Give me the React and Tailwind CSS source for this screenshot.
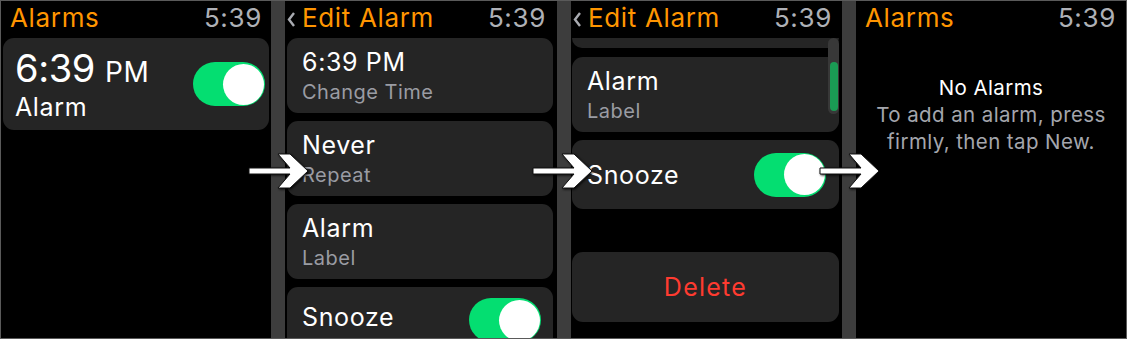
import React from "react";

const font = { fontFamily: "Inter, 'Noto Sans', sans-serif" };

// Green switch in the "on" state
const Toggle = () => (
  <div className="w-[72px] h-[44px] rounded-full bg-[#04de71] flex items-center justify-end pr-[1px]">
    <div className="w-[41px] h-[41px] rounded-full bg-white" />
  </div>
);

const Chevron = () => (
  <svg width="9" height="17" viewBox="0 0 9 17" className="mr-[6px] mt-[3px]">
    <polyline points="7,2 2,8.5 7,15" fill="none" stroke="#a9abb1" strokeWidth="2.4" />
  </svg>
);

const Header = ({ title, back }) => (
  <div className="h-[37px] flex items-start justify-between pt-[1px] shrink-0">
    <div className="flex items-center">
      {back && <Chevron />}
      <span className="text-[26px] leading-[32px] text-[#ff9500] tracking-wide">{title}</span>
    </div>
    <span className="text-[26px] leading-[32px] text-[#aeb0b6] tracking-wide">5:39</span>
  </div>
);

const InfoCard = ({ title, sub }) => (
  <div className="h-[75px] shrink-0 rounded-[11px] bg-[#252525] px-[15px] pt-[9px]">
    <div className="text-[25px] leading-[30px] text-white tracking-wide">{title}</div>
    <div className="text-[20px] leading-[30px] text-[#9a9ca3] tracking-wide">{sub}</div>
  </div>
);

const Arrow = ({ left }) => (
  <svg
    width="62"
    height="38"
    viewBox="0 0 62 38"
    className="absolute top-[151px] drop-shadow-[1px_1px_1px_rgba(0,0,0,0.8)]"
    style={{ left }}
  >
    <polygon
      points="1,16 42,16 30,2 42,2 60,19 42,36 30,36 42,22 1,22"
      fill="white"
      stroke="#111"
      strokeWidth="1"
    />
  </svg>
);

const Separator = () => <div className="w-[14px] shrink-0 bg-[#3d3d3d]" />;

export default function App() {
  return (
    <div
      className="relative w-[1127px] h-[339px] bg-black border border-[#5a5a5a] flex overflow-hidden"
      style={font}
    >
      {/* Screen 1: alarm list */}
      <div className="w-[270px] shrink-0 flex flex-col px-[2px]">
        <div className="px-[7px]">
          <Header title="Alarms" />
        </div>
        <div className="h-[92px] rounded-[11px] bg-[#252525] flex items-center justify-between pl-[12px] pr-[4px]">
          <div className="-mt-[3px]">
            <div className="flex items-baseline text-white">
              <span className="text-[38px] leading-[44px] tracking-[-0.01em]">6:39</span>
              <span className="text-[28px] leading-[44px] ml-[10px] tracking-wide">PM</span>
            </div>
            <div className="text-[25px] leading-[26px] text-white tracking-wide">Alarm</div>
          </div>
          <Toggle />
        </div>
      </div>
      <Separator />

      {/* Screen 2: edit alarm */}
      <div className="w-[272px] shrink-0 flex flex-col pl-[2px] pr-[4px]">
        <div className="pr-[7px]">
          <Header title="Edit Alarm" back />
        </div>
        <div className="flex flex-col gap-[8px]">
          <InfoCard title="6:39 PM" sub="Change Time" />
          <InfoCard title="Never" sub="Repeat" />
          <InfoCard title="Alarm" sub="Label" />
          <div className="h-[75px] shrink-0 rounded-[11px] bg-[#252525] flex items-start justify-between pl-[15px] pr-[12px] pt-[15px]">
            <span className="text-[25px] leading-[30px] text-white tracking-wide">Snooze</span>
            <div className="-mt-[4px]">
              <Toggle />
            </div>
          </div>
        </div>
      </div>
      <Separator />

      {/* Screen 3: edit alarm scrolled */}
      <div className="relative w-[271px] shrink-0 flex flex-col pl-[1px] pr-[3px]">
        <div className="pl-[1px] pr-[7px]">
          <Header title="Edit Alarm" back />
        </div>
        <div className="h-[10px] shrink-0 rounded-b-[11px] bg-[#252525]" />
        <div className="mt-[9px]">
          <InfoCard title="Alarm" sub="Label" />
        </div>
        <div className="mt-[8px] h-[69px] shrink-0 rounded-[11px] bg-[#252525] flex items-center justify-between pl-[15px] pr-[13px]">
          <span className="text-[25px] leading-[30px] text-white tracking-wide">Snooze</span>
          <Toggle />
        </div>
        <div className="mt-[43px] h-[70px] shrink-0 rounded-[11px] bg-[#252525] flex items-center justify-center">
          <span className="text-[25px] leading-[30px] text-[#ff3b30] tracking-wider">Delete</span>
        </div>
        {/* scroll indicator */}
        <div className="absolute top-[37px] right-[3px] w-[11px] h-[76px] rounded-full bg-[#383838] flex flex-col items-center pt-[24px]">
          <div className="w-[8px] h-[49px] rounded-full bg-[#1a9b54]" />
        </div>
      </div>
      <Separator />

      {/* Screen 4: empty list */}
      <div className="w-[270px] shrink-0 flex flex-col px-[9px]">
        <div className="pr-[1px]">
          <Header title="Alarms" />
        </div>
        <div className="mt-[36px] flex flex-col items-center text-center tracking-wide">
          <div className="text-[20.5px] leading-[27px] text-white">No Alarms</div>
          <div className="text-[20.5px] leading-[27px] text-[#a4a6ad]">
            To add an alarm, press
            <br />
            firmly, then tap New.
          </div>
        </div>
      </div>

      {/* transition arrows */}
      <Arrow left={247} />
      <Arrow left={531} />
      <Arrow left={818} />
    </div>
  );
}
